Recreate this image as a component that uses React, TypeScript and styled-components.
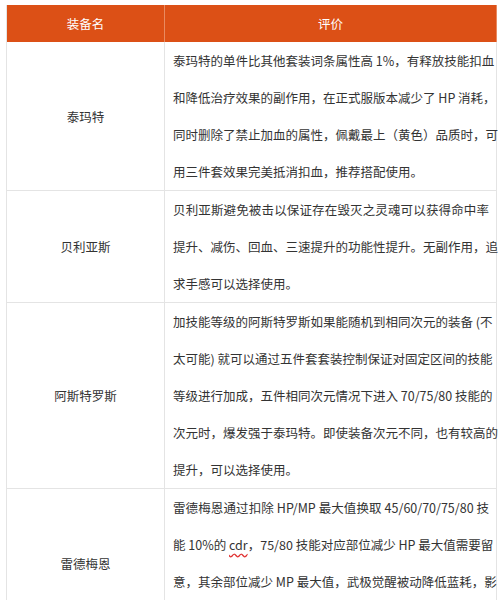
import React, { FC } from "react";
import styled, { createGlobalStyle } from "styled-components";

const GlobalStyle = createGlobalStyle`
  body {
    margin: 0;
    background: #ffffff;
    font-family: "Noto Sans CJK SC", "Noto Sans", sans-serif;
    color: #333333;
  }
`;

const Table = styled.div`
  display: grid;
  grid-template-columns: 158px 332px;
  margin: 5px 0 0 6px;
  border-left: 1px solid #e4e4e4;
  font-size: 12.5px;
`;

const HeadCell = styled.div`
  height: 37px;
  background: #dc5016;
  color: #ffffff;
  display: flex;
  align-items: center;
  justify-content: center;
  border-right: 1px solid #e98a60;
`;

const NameCell = styled.div`
  display: flex;
  align-items: center;
  justify-content: center;
  border-bottom: 1px solid #e4e4e4;
  border-right: 1px solid #e4e4e4;
`;

const TextCell = styled.div`
  padding: 0 7px 0 8px;
  border-bottom: 1px solid #e4e4e4;
  border-right: 1px solid #e4e4e4;
`;

const Line = styled.div<{ $last: boolean }>`
  line-height: 37px;
  white-space: nowrap;
  text-align: justify;
  text-align-last: ${(p) => (p.$last ? "left" : "justify")};
`;

const Typo = styled.span`
  text-decoration: underline wavy #e03030;
  text-underline-offset: 3px;
`;

type Row = { name: string; lines: React.ReactNode[] };

const rows: Row[] = [
  {
    name: "泰玛特",
    lines: [
      "泰玛特的单件比其他套装词条属性高 1%，有释放技能扣血",
      "和降低治疗效果的副作用，在正式服版本减少了 HP 消耗，",
      "同时删除了禁止加血的属性，佩戴最上（黄色）品质时，可",
      "用三件套效果完美抵消扣血，推荐搭配使用。",
    ],
  },
  {
    name: "贝利亚斯",
    lines: [
      "贝利亚斯避免被击以保证存在毁灭之灵魂可以获得命中率",
      "提升、减伤、回血、三速提升的功能性提升。无副作用，追",
      "求手感可以选择使用。",
    ],
  },
  {
    name: "阿斯特罗斯",
    lines: [
      "加技能等级的阿斯特罗斯如果能随机到相同次元的装备 (不",
      "太可能) 就可以通过五件套套装控制保证对固定区间的技能",
      "等级进行加成，五件相同次元情况下进入 70/75/80 技能的",
      "次元时，爆发强于泰玛特。即使装备次元不同，也有较高的",
      "提升，可以选择使用。",
    ],
  },
  {
    name: "雷德梅恩",
    lines: [
      "雷德梅恩通过扣除 HP/MP 最大值换取 45/60/70/75/80 技",
      <>
        能 10%的 <Typo>cdr</Typo>，75/80 技能对应部位减少 HP 最大值需要留
      </>,
      "意，其余部位减少 MP 最大值，武极觉醒被动降低蓝耗，影",
      "响不大，可以选择使用。",
    ],
  },
];

const App: FC = () => {
  return (
    <>
      <GlobalStyle />
      <Table>
        <HeadCell>装备名</HeadCell>
        <HeadCell>评价</HeadCell>
        {rows.map((row) => (
          <React.Fragment key={row.name}>
            <NameCell>{row.name}</NameCell>
            <TextCell>
              {row.lines.map((line, i) => (
                <Line key={i} $last={i === row.lines.length - 1}>
                  {line}
                </Line>
              ))}
            </TextCell>
          </React.Fragment>
        ))}
      </Table>
    </>
  );
};

export default App;
